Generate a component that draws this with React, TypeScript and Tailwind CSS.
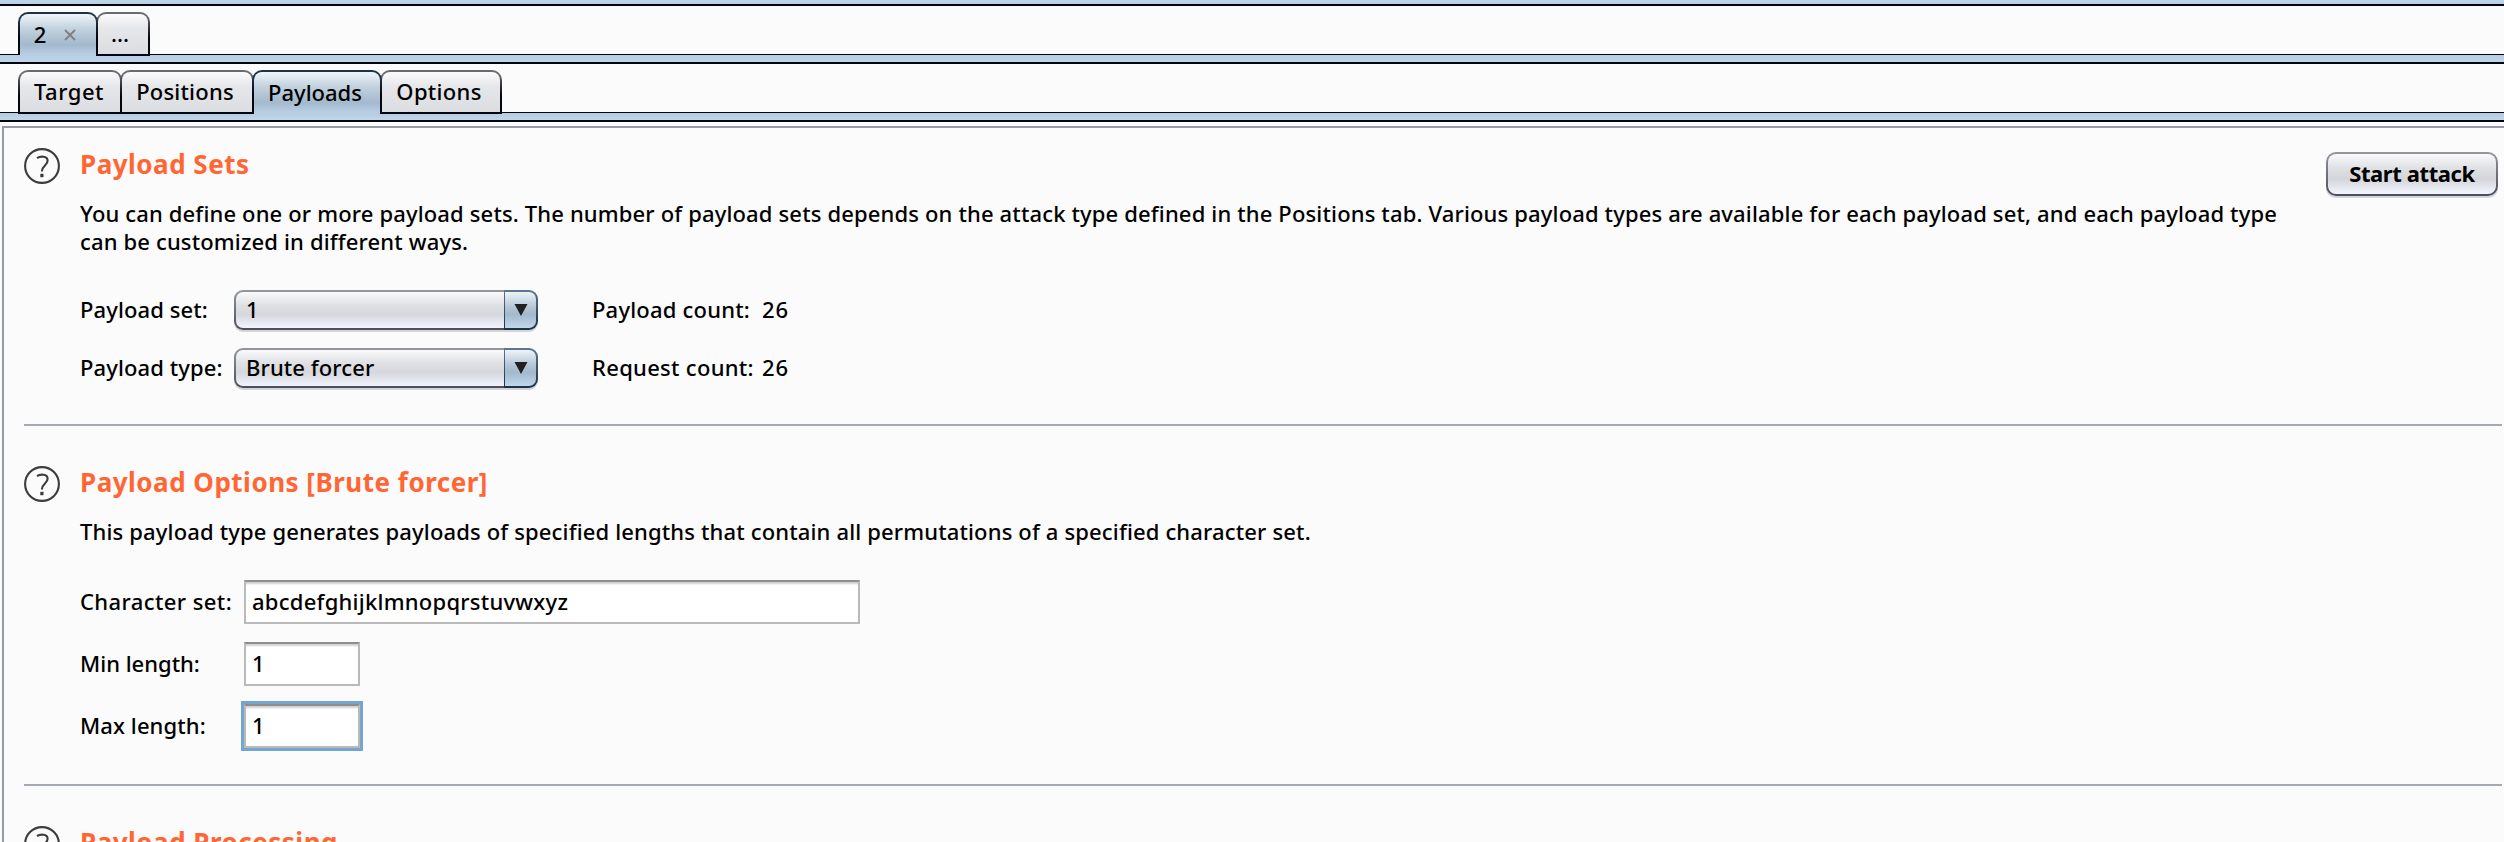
import type { ReactNode } from 'react';

type TabProps = { active?: boolean; width: string; children: ReactNode };

function Tab({ active, width, children }: TabProps) {
  if (active) {
    return (
      <div className={`relative z-20 -ml-0.5 h-[43px] shrink-0 rounded-t-[10px] bg-linear-to-b from-[#1f3347] from-20% to-[#05050f] to-60% px-0.5 pt-0.5 ${width}`}>
        <div className="flex h-[41px] items-center justify-center rounded-t-lg bg-[linear-gradient(#f0f5f9_0%,#c3d2de_35%,#a3b9cd_75%,#b9cfe4_100%)] pb-0.5">
          {children}
        </div>
      </div>
    );
  }
  return (
    <div className={`relative z-10 -ml-0.5 h-11 shrink-0 rounded-t-[10px] bg-linear-to-b from-[#6a6a70] from-10% to-[#05050f] to-60% p-0.5 ${width}`}>
      <div className="flex h-10 items-center justify-center rounded-t-lg bg-[linear-gradient(#fbfbfc_0%,#e6e7ea_35%,#dcdde1_100%)] pb-0.5">
        {children}
      </div>
    </div>
  );
}

function TabStrip({ children }: { children: ReactNode }) {
  return (
    <div>
      <div className="flex h-12 items-start pt-1.5 pl-5">{children}</div>
      <div className="h-px bg-[#05050f]" />
      <div className="h-[7px] bg-linear-to-b from-[#b6cbe0] to-[#c0d6ea]" />
      <div className="h-0.5 bg-[#05050f]" />
    </div>
  );
}

function HelpIcon() {
  return (
    <svg className="size-9 shrink-0" viewBox="0 0 36 36" fill="none" stroke="#3c3c3c" strokeWidth="2.1">
      <circle cx="18" cy="18" r="16.9" />
      <path d="M13 10.2C16 8 23.6 7.6 23.6 12.8C23.6 17.6 17.9 17.4 17.9 23.4" />
      <path d="M17.9 25.8V29.2" strokeWidth="3.2" />
    </svg>
  );
}

function Section({ title, lead, action, children }: { title: string; lead: string; action?: ReactNode; children?: ReactNode }) {
  return (
    <section className="flex items-start">
      <HelpIcon />
      <div className="-mt-0.5 ml-5 w-[2210px] shrink-0">
        <h2 className="text-[26px] leading-9 font-bold tracking-[0.5px] text-[#ff6633]">{title}</h2>
        <p className="mt-[17px] min-h-7 leading-7 tracking-[0.15px]">{lead}</p>
        {children}
      </div>
      {action}
    </section>
  );
}

function Select({ value }: { value: string }) {
  return (
    <div className="flex h-10 w-[304px] rounded-[9px] shadow-[0_2px_0_#d3d3d9]">
      <div className="grow rounded-l-[9px] bg-linear-to-b from-[#94989e] to-[#4b4e59] py-0.5 pl-0.5">
        <div className="flex h-9 items-center rounded-l-[7px] bg-[linear-gradient(#fafafb_0%,#e0e1e5_35%,#d5d7dc_62%,#f1f4fd_100%)] pb-0.5 pl-2.5">
          {value}
        </div>
      </div>
      <div className="w-[34px] rounded-r-[9px] bg-linear-to-b from-[#5d7890] to-[#1b2f45] py-0.5 pr-0.5 pl-px">
        <div className="flex h-9 items-center justify-center rounded-r-[7px] bg-[linear-gradient(#eef4f8_0%,#b7c8d7_40%,#a2b8cc_62%,#c0d6ec_100%)]">
          <svg className="size-3.5" viewBox="0 0 14 14">
            <path d="M0.5 1H13.5L7 13Z" fill="#202020" />
          </svg>
        </div>
      </div>
    </div>
  );
}

function Field({ value, width, focused }: { value: string; width: string; focused?: boolean }) {
  return (
    <div className={`flex h-11 items-center border-2 border-[#bababa] border-t-[#8e8e8e] bg-white pb-0.5 pl-1.5 shadow-[inset_0_3px_2px_-1px_#d0d0d0] ${width} ${focused ? 'outline-3 outline-[#73a5d3]' : ''}`}>
      {value}
    </div>
  );
}

function Separator() {
  return <div className="mr-0.5 h-0.5 bg-[#a5a9b3]" />;
}

export default function App() {
  return (
    <div className="flex h-[842px] w-[2504px] flex-col overflow-hidden bg-[#fbfbfb] font-['Noto_Sans',sans-serif] text-[22px] leading-7 font-medium whitespace-nowrap text-black">
      <div className="h-1 shrink-0 bg-[#bdd3e8]" />
      <div className="h-0.5 shrink-0 bg-[#05050f]" />

      <TabStrip>
        <Tab active width="w-20">
          <span className="-ml-1.5 flex items-center gap-[18px]">
            2
            <svg className="mt-0.5 size-3" viewBox="0 0 12 12" stroke="#808080" strokeWidth="1.8">
              <path d="M1 1L11 11M11 1L1 11" />
            </svg>
          </span>
        </Tab>
        <Tab width="w-[54px]"><span className="-ml-1.5">...</span></Tab>
      </TabStrip>

      <TabStrip>
        <Tab width="w-[104px]"><span className="-ml-0.5 tracking-[0.5px]">Target</span></Tab>
        <Tab width="w-[134px]"><span className="-ml-1 tracking-[0.2px]">Positions</span></Tab>
        <Tab active width="w-[130px]"><span className="-ml-1">Payloads</span></Tab>
        <Tab width="w-[122px]"><span className="-ml-1 tracking-[0.3px]">Options</span></Tab>
      </TabStrip>

      <main className="mt-1 ml-0.5 flex grow flex-col whitespace-normal border-t-2 border-l-2 border-[#9699a6] pl-5">
        <div className="h-[296px] shrink-0 pt-5">
          <Section
            title="Payload Sets"
            lead="You can define one or more payload sets. The number of payload sets depends on the attack type defined in the Positions tab. Various payload types are available for each payload set, and each payload type can be customized in different ways."
            action={
              <button className="mt-1 ml-9 h-11 w-[172px] shrink-0 rounded-[10px] bg-linear-to-b from-[#94989e] to-[#4b4e59] p-0.5 font-bold tracking-[-0.4px] shadow-[0_2px_0_#d3d3d9]">
                <span className="flex h-10 items-center justify-center rounded-lg bg-[linear-gradient(#fafafb_0%,#e0e1e5_35%,#d3d5da_62%,#f4f6ff_100%)] pb-0.5">
                  Start attack
                </span>
              </button>
            }
          >
            <div className="mt-[35px] grid grid-cols-[154px_358px_170px_auto] items-center gap-y-[18px] whitespace-nowrap tracking-[0.1px]">
              <span className="pb-0.5">Payload set:</span>
              <Select value="1" />
              <span className="pb-0.5 tracking-[0.2px]">Payload count:</span>
              <span className="pb-0.5 tracking-[0.9px]">26</span>
              <span className="pb-0.5">Payload type:</span>
              <Select value="Brute forcer" />
              <span className="pb-0.5 tracking-[0.3px]">Request count:</span>
              <span className="pb-0.5 tracking-[0.9px]">26</span>
            </div>
          </Section>
        </div>
        <Separator />

        <div className="h-[358px] shrink-0 pt-10">
          <Section
            title="Payload Options [Brute forcer]"
            lead="This payload type generates payloads of specified lengths that contain all permutations of a specified character set."
          >
            <div className="mt-[35px] grid grid-cols-[164px_auto] items-center gap-y-[18px]">
              <span className="pb-0.5 tracking-[0.4px]">Character set:</span>
              <span className="tracking-[0.25px]"><Field value="abcdefghijklmnopqrstuvwxyz" width="w-[616px]" /></span>
              <span className="pb-0.5">Min length:</span>
              <Field value="1" width="w-[116px]" />
              <span className="pb-0.5 tracking-[0.1px]">Max length:</span>
              <Field value="1" width="w-[116px]" focused />
            </div>
          </Section>
        </div>
        <Separator />

        <div className="h-14 shrink-0 overflow-hidden pt-10">
          <Section title="Payload Processing" lead="" />
        </div>
      </main>
    </div>
  );
}
